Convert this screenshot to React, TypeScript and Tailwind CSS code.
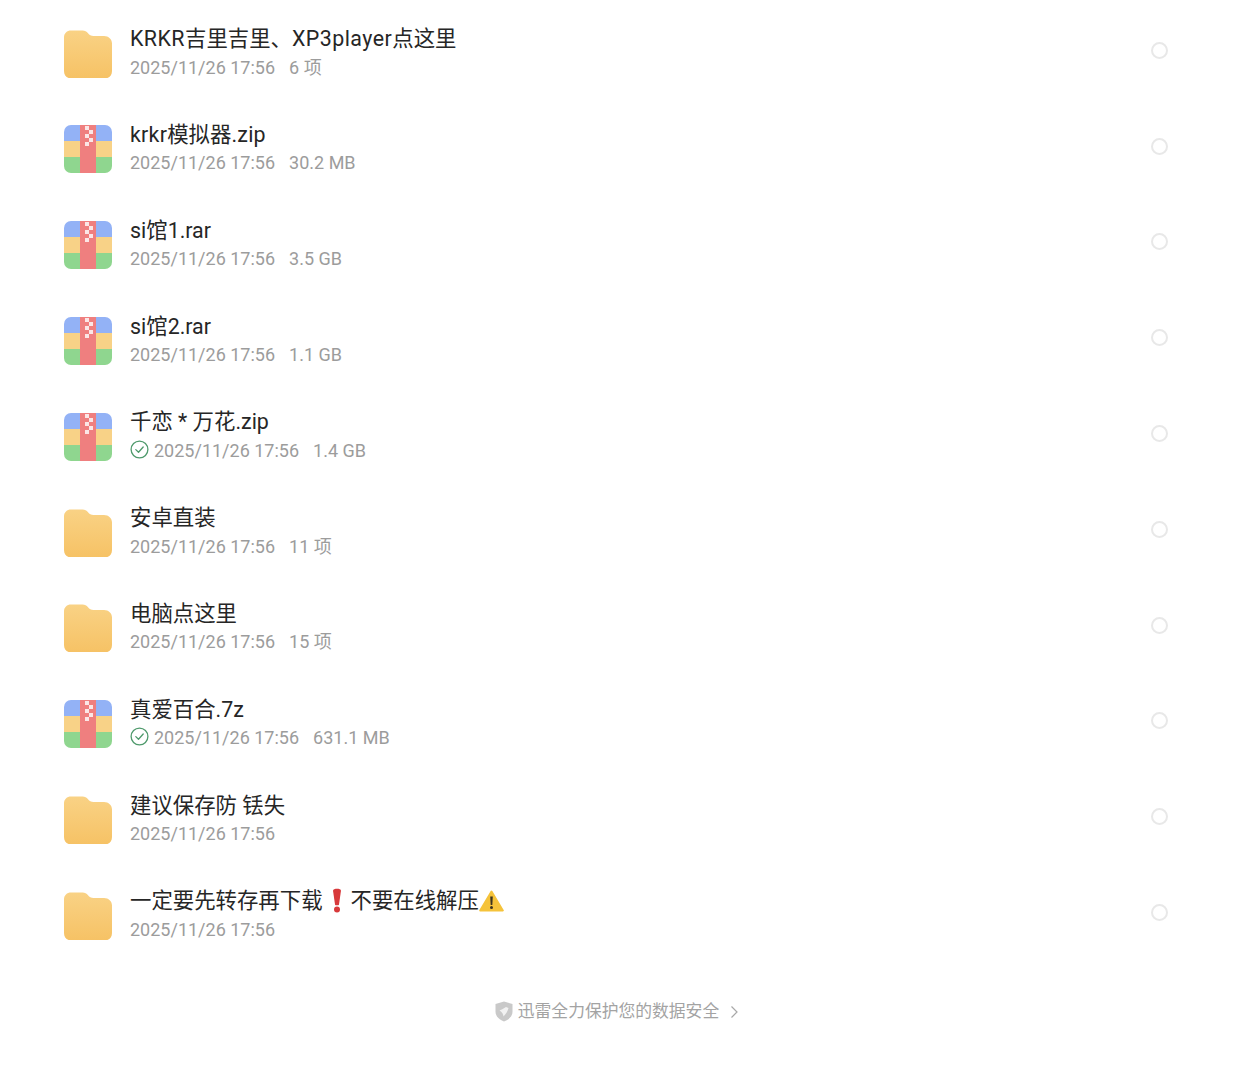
function Folder() {
  return (
    <svg width="48" height="48" viewBox="0 0 48 48" className="shrink-0">
      <defs>
        <linearGradient id="fg" x1="0" y1="0" x2="0" y2="1">
          <stop offset="0" stopColor="#f9d285" />
          <stop offset="1" stopColor="#f6c265" />
        </linearGradient>
      </defs>
      <path
        d="M7 0.5H18.5C21 0.5 22.5 1.5 24 3.2C25.5 5 27 6 29.5 6H40C44.6 6 48 9.2 48 13.5V41C48 45.5 45 48.5 40.5 48.5H7.5C3 48.5 0 45.5 0 41V7.5C0 3.2 3 0.5 7 0.5Z"
        fill="url(#fg)"
      />
    </svg>
  );
}

function Archive() {
  return (
    <svg width="48" height="48" viewBox="0 0 48 48" className="shrink-0">
      <defs>
        <clipPath id="ac">
          <rect x="0" y="0" width="48" height="48" rx="7" />
        </clipPath>
      </defs>
      <g clipPath="url(#ac)">
        <rect x="0" y="0" width="48" height="16" fill="#93b2f6" />
        <rect x="0" y="16" width="48" height="16" fill="#f8d287" />
        <rect x="0" y="32" width="48" height="16" fill="#8fd68f" />
        <rect x="16" y="0" width="16" height="48" fill="#ef7f7f" />
        <rect x="21" y="1" width="4" height="4" fill="#fbe6e6" />
        <rect x="25" y="5" width="4" height="4" fill="#fbe6e6" />
        <rect x="21" y="9" width="4" height="4" fill="#fbe6e6" />
        <rect x="25" y="13" width="4" height="4" fill="#fbe6e6" />
        <rect x="21" y="17" width="4" height="4" fill="#fbe6e6" />
      </g>
    </svg>
  );
}

function Check() {
  return (
    <svg width="19" height="19" viewBox="0 0 19 19" className="mr-[5px] mb-[2px] shrink-0" fill="none">
      <circle cx="9.5" cy="9.5" r="8.4" stroke="#4f9a6c" strokeWidth="1.3" />
      <path d="M5.8 9.6L8.5 12.2L13.2 7" stroke="#4f9a6c" strokeWidth="1.3" strokeLinecap="round" strokeLinejoin="round" />
    </svg>
  );
}

function Bang() {
  return (
    <svg width="28" height="25" viewBox="0 0 28 25" className="inline-block align-[-5px]">
      <path d="M10 2.6C10 0.2 18 0.2 18 2.6L16 16.4C15.8 17.6 12.2 17.6 12 16.4Z" fill="#d8393b" />
      <circle cx="14" cy="21.5" r="3" fill="#d8393b" />
    </svg>
  );
}

function Warn() {
  return (
    <svg width="25" height="22" viewBox="0 0 25 22" className="inline-block align-[-4px]">
      <path d="M12.5 1.5L23.8 20.5H1.2Z" fill="#f5c33b" stroke="#f5c33b" strokeWidth="2" strokeLinejoin="round" />
      <path d="M11.2 6.5H13.8L13.3 15H11.7Z" fill="#3c3320" />
      <circle cx="12.5" cy="17.5" r="1.5" fill="#3c3320" />
    </svg>
  );
}

type Item = { kind: "f" | "a"; name: React.ReactNode; size?: string; ok?: boolean };

const items: Item[] = [
  {
    kind: "f",
    name: (
      <>
        <span className="tracking-[0.45px]">KRKR</span>吉里吉里、<span className="tracking-[0.45px]">XP3player</span>点这里
      </>
    ),
    size: "6 项",
  },
  { kind: "a", name: <><span className="tracking-[0.25px]">krkr</span>模拟器<span className="tracking-[0.25px]">.zip</span></>, size: "30.2 MB" },
  { kind: "a", name: "si馆1.rar", size: "3.5 GB" },
  { kind: "a", name: "si馆2.rar", size: "1.1 GB" },
  { kind: "a", name: "千恋 * 万花.zip", size: "1.4 GB", ok: true },
  { kind: "f", name: "安卓直装", size: "11 项" },
  { kind: "f", name: "电脑点这里", size: "15 项" },
  { kind: "a", name: "真爱百合.7z", size: "631.1 MB", ok: true },
  { kind: "f", name: "建议保存防 铥失" },
  {
    kind: "f",
    name: (
      <>
        一定要先转存再下载
        <Bang />
        不要在线解压
        <Warn />
      </>
    ),
  },
];

export default function App() {
  return (
    <div className="font-['Roboto','Noto_Sans_CJK_SC',sans-serif] w-[1233px] h-[1080px] bg-white pt-[2.5px] overflow-hidden">
      <ul>
        {items.map((it, i) => (
          <li key={i} className="h-[95.8px] flex items-center pl-[64px] pr-[65px]">
            <div className="flex-1 flex items-center mt-[6.5px]">
              {it.kind === "f" ? <Folder /> : <Archive />}
              <div className="ml-[18px] flex-1 flex flex-col">
                <div className="h-[29px] leading-[29px] text-[21.4px] text-[#262626] whitespace-nowrap">{it.name}</div>
                <div className="h-[29px] -mt-[0.5px] mb-[1.5px] flex items-center text-[18px] text-[#9c9c9c] whitespace-nowrap">
                  {it.ok && <Check />}
                  <span>2025/11/26 17:56</span>
                  {it.size && <span className="ml-[14px]">{it.size}</span>}
                </div>
              </div>
            </div>
            <div className="w-[17px] h-[17px] rounded-full border-2 border-[#e8e8e8] shrink-0" />
          </li>
        ))}
      </ul>
      <div className="mt-[38.5px] flex items-center justify-center gap-[5px] pl-[4px] text-[16.8px] text-[#a3a3a3]">
        <svg width="18" height="21" viewBox="0 0 18 21">
          <path d="M9 0.5L17.5 3V10.5C17.5 15.5 13.5 18.8 9 20.5C4.5 18.8 0.5 15.5 0.5 10.5V3Z" fill="#c9c9c9" />
          <path d="M4.5 9.5C7 8.5 8.5 7.5 11 6L13.5 7C12.5 10.5 11 13 8.5 15.5C8.5 13.5 7 11 4.5 9.5Z" fill="#f2f2f2" />
        </svg>
        <span>迅雷全力保护您的数据安全</span>
        <svg width="16" height="16" viewBox="0 0 16 16" fill="none" className="ml-[2px]">
          <path d="M5.5 2.5L11 8L5.5 13.5" stroke="#a8a8a8" strokeWidth="1.2" />
        </svg>
      </div>
    </div>
  );
}
